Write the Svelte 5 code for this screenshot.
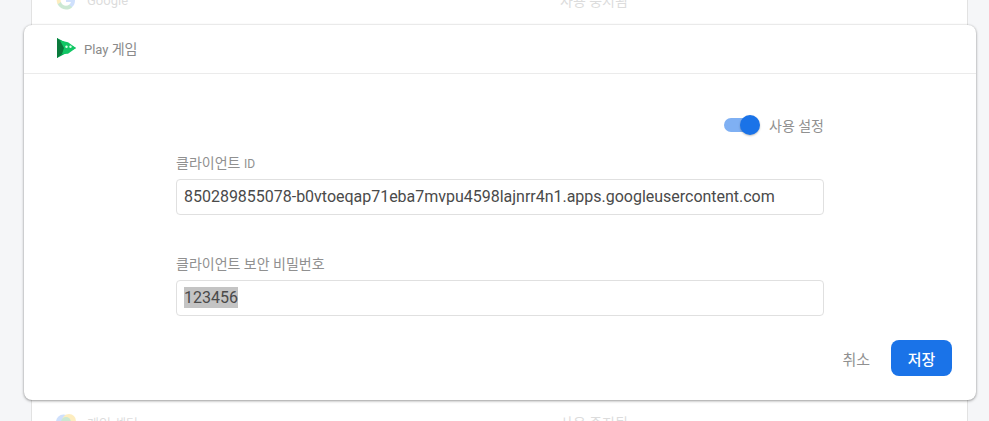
<script>
  const clientId = '850289855078-b0vtoeqap71eba7mvpu4598lajnrr4n1.apps.googleusercontent.com';
</script>

<div class="page">
  <div class="list">
    <div class="row top">
      <svg class="provider" viewBox="0 0 20 20" width="20" height="20">
        <path d="M19 10.200c0-.7-.1-1.300-.2-2H10v3.800h5a4.300 4.300 0 0 1-1.900 2.800v2.300h3C18 15.500 19 13 19 10.200z" fill="#4285f4"/>
        <path d="M10 19.500c2.600 0 4.700-.9 6.200-2.300l-3.100-2.400c-.8.600-1.900.9-3.100.9-2.400 0-4.400-1.600-5.100-3.800H1.700v2.400A9.500 9.500 0 0 0 10 19.500z" fill="#34a853"/>
        <path d="M4.900 11.900a5.600 5.600 0 0 1 0-3.600V5.900H1.700a9.500 9.500 0 0 0 0 8.400z" fill="#fbbc05"/>
        <path d="M10 4.400c1.400 0 2.600.5 3.600 1.400l2.700-2.700A9.500 9.500 0 0 0 1.700 5.900l3.200 2.400C5.600 6 7.600 4.400 10 4.400z" fill="#ea4335"/>
      </svg>
      <span class="name">Google</span>
      <span class="status">사용 중지됨</span>
    </div>
    <div class="spacer"></div>
    <div class="row bottom">
      <svg class="provider" viewBox="0 0 20 20" width="20" height="20">
        <circle cx="7.500" cy="10" r="7.500" fill="#4285f4"/>
        <circle cx="13" cy="9" r="7" fill="#fbbc05"/>
        <circle cx="10" cy="10" r="5" fill="#34a853"/>
      </svg>
      <span class="name">게임 센터</span>
      <span class="status">사용 중지됨</span>
    </div>
  </div>

  <section class="modal">
    <header class="head">
      <svg class="play" viewBox="0 0 20 20" width="20" height="20">
        <path d="M0 0 L19 10 L0 20 Z" fill="#00a651"/>
        <path d="M0 0 L7 6 L7 14 L0 20 Z" fill="#0a7a3c"/>
        <path d="M3 2.500 L11 4.200 L19 10 L11 15.800 L5 16 L7 10 Z" fill="#12c765"/>
        <circle cx="9.500" cy="8.800" r="1.200" fill="#d9ffe8"/>
        <circle cx="13.500" cy="8.800" r="1.200" fill="#d9ffe8"/>
      </svg>
      <span class="title">Play <span class="ko">게임</span></span>
    </header>

    <div class="body">
      <div class="toggle-row">
        <span class="switch"><span class="thumb"></span></span>
        <span class="toggle-label">사용 설정</span>
      </div>

      <div class="label first">클라이언트 <span class="latin">ID</span></div>
      <div class="field">{clientId}</div>

      <div class="label second">클라이언트 보안 비밀번호</div>
      <div class="field"><span class="selected">123456</span></div>
    </div>

    <footer class="foot">
      <button class="cancel" type="button">취소</button>
      <button class="save" type="button">저장</button>
    </footer>
  </section>
</div>

<style>
  :global(body) {
    margin: 0;
    background: #f5f6f8;
    font-family: Roboto, "Noto Sans CJK KR", sans-serif;
  }
  .page {
    position: relative;
    width: 989px;
    height: 421px;
    overflow: hidden;
    display: flex;
    justify-content: center;
  }
  .list {
    width: 937px;
    margin-left: 10px;
    height: 421px;
    background: #fff;
    border-left: 1px solid #e2e2e2;
    border-right: 1px solid #e2e2e2;
    box-sizing: border-box;
    display: flex;
    flex-direction: column;
    padding-left: 24px;
  }
  .row {
    display: flex;
    align-items: center;
    height: 20px;
    flex: none;
    opacity: 0.25;
    color: #777;
  }
  .row.top { margin-top: -10px; }
  .spacer { flex: 1; }
  .row.bottom { margin-bottom: -11px; }
  .name { margin-left: 11px; width: 473px; font-size: 13px; }
  .status { font-size: 14px; }
  .modal {
    position: absolute;
    left: 24px;
    top: 25px;
    width: 952px;
    height: 375px;
    background: #fff;
    border-radius: 8px;
    box-shadow: 0 1px 3px rgba(0, 0, 0, 0.38), 0 0 2px rgba(0, 0, 0, 0.12);
    display: flex;
    flex-direction: column;
  }
  .head {
    height: 49px;
    box-sizing: border-box;
    border-bottom: 1px solid #ebebeb;
    display: flex;
    align-items: center;
    padding-left: 33px;
    flex: none;
  }
  .play { margin-right: 7px; margin-top: -3px; }
  .title {
    font-size: 13px;
    color: #8a8a8a;
    margin-top: -2px;
  }
  .ko { font-size: 14px; }
  .body {
    padding: 0 152px;
    flex: none;
  }
  .toggle-row {
    display: flex;
    align-items: center;
    justify-content: flex-end;
    height: 24px;
    margin-top: 39px;
  }
  .switch {
    position: relative;
    width: 26px;
    height: 14px;
    border-radius: 7px;
    background: #7fb0f3;
    margin-right: 19px;
  }
  .thumb {
    position: absolute;
    left: 16px;
    top: -3px;
    width: 20px;
    height: 20px;
    border-radius: 50%;
    background: #1a73e8;
    box-shadow: 0 1px 2px rgba(0, 0, 0, 0.25);
  }
  .toggle-label {
    font-size: 14px;
    color: #909090;
  }
  .label {
    font-size: 14px;
    line-height: 16px;
    color: #909090;
    margin-bottom: 7px;
  }
  .latin { font-size: 12px; }
  .label.first { margin-top: 18px; }
  .label.second { margin-top: 41px; margin-bottom: 8px; }
  .field {
    height: 36px;
    box-sizing: border-box;
    border: 1px solid #e0e0e0;
    border-radius: 4px;
    padding-left: 7px;
    font-size: 16px;
    line-height: 34px;
    letter-spacing: -0.015px;
    color: #4a4a4a;
    white-space: nowrap;
  }
  .selected { background: #c4c4c4; display: inline-block; line-height: 21px; }
  .foot {
    display: flex;
    justify-content: flex-end;
    align-items: center;
    padding-right: 24px;
    margin-top: 24px;
  }
  button {
    font-family: inherit;
    border: 0;
    padding: 0;
    font-size: 15px;
  }
  .cancel {
    background: none;
    color: #909090;
    margin-right: 21px;
  }
  .save {
    width: 61px;
    height: 36px;
    border-radius: 8px;
    background: #1a73e8;
    color: #fff;
    font-weight: 500;
  }
</style>
